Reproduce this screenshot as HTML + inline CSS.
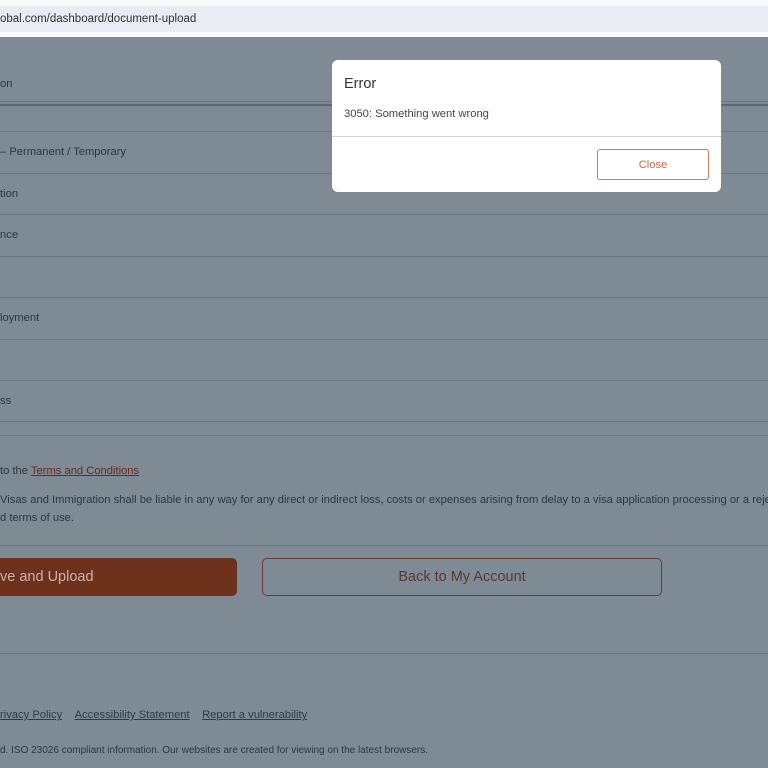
<!DOCTYPE html>
<html><head><style>
*{margin:0;padding:0;box-sizing:border-box}
body{width:768px;height:768px;overflow:hidden;background:#7f8b94;font-family:"Liberation Sans",Arial,sans-serif;position:relative;color:#2f3a44}
.top{position:absolute;left:0;top:0;width:768px;height:37px;background:#fafbfd}
.addr{position:absolute;left:0;top:6px;width:768px;height:26px;background:#e9ecf5;font-size:11.5px;color:#333;line-height:27px;padding-left:0}
.l{position:absolute;left:0;width:768px;height:1px;background:#6b7780}
.t{position:absolute;left:0;font-size:11.2px;color:#2c3640;white-space:nowrap}
.modal{position:absolute;left:332px;top:60px;width:389px;height:132px;background:#fff;border-radius:6px}
.modal h3{position:absolute;left:12px;top:16px;font-weight:normal;font-size:14.5px;color:#333}
.modal p{position:absolute;left:12px;top:48px;font-size:11.2px;color:#444}
.modal .sep{position:absolute;left:0;top:76px;width:389px;height:1px;background:#d6d6d6}
.close{position:absolute;left:265px;top:89px;width:112px;height:31px;border:1px solid #d6764f;border-radius:3px;color:#d0653a;font-size:11.2px;text-align:center;line-height:30px}
a{color:#2c3a4a;text-decoration:underline}
</style></head><body>
<div class="top"></div>
<div class="addr">obal.com/dashboard/document-upload</div>
<div class="t" style="top:78px">on</div>
<div class="l" style="top:101px"></div>
<div class="l" style="top:104px;height:2px;background:#5d6870"></div>
<div class="l" style="top:131px"></div>
<div class="t" style="top:146px">– Permanent / Temporary</div>
<div class="l" style="top:173px"></div>
<div class="t" style="top:188px">tion</div>
<div class="l" style="top:214px"></div>
<div class="t" style="top:229px">nce</div>
<div class="l" style="top:256px"></div>
<div class="l" style="top:297px"></div>
<div class="t" style="top:312px">loyment</div>
<div class="l" style="top:339px"></div>
<div class="l" style="top:380px"></div>
<div class="t" style="top:395px">ss</div>
<div class="l" style="top:421px"></div>
<div class="l" style="top:435px"></div>
<div class="t" style="top:465px">to the <a style="color:#6a2a1a">Terms and Conditions</a></div>
<div class="t" style="top:494px">Visas and Immigration shall be liable in any way for any direct or indirect loss, costs or expenses arising from delay to a visa application processing or a reje</div>
<div class="t" style="top:512px">d terms of use.</div>
<div class="l" style="top:545px"></div>
<div style="position:absolute;left:-10px;top:558px;width:247px;height:38px;background:#6e321c;border-radius:5px;color:#c9b2a8;font-size:14.5px;line-height:38px;padding-left:10px">ve and Upload</div>
<div style="position:absolute;left:262px;top:558px;width:400px;height:38px;border:1px solid #6b3a33;border-radius:5px;color:#5a3830;font-size:14.5px;line-height:36px;text-align:center">Back to My Account</div>
<div class="l" style="top:653px"></div>
<div class="t" style="top:709px"><a>rivacy Policy</a>&nbsp;&nbsp;&nbsp;&nbsp;<a>Accessibility Statement</a>&nbsp;&nbsp;&nbsp;&nbsp;<a>Report a vulnerability</a></div>
<div class="t" style="top:745px;font-size:10px">d. ISO 23026 compliant information. Our websites are created for viewing on the latest browsers.</div>
<div class="modal"><h3>Error</h3><p>3050: Something went wrong</p><div class="sep"></div><div class="close">Close</div></div>
</body></html>
